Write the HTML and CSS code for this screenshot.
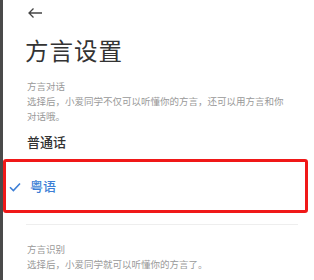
FILE: index.html
```html
<!DOCTYPE html>
<html lang="zh">
<head>
<meta charset="utf-8">
<link rel="stylesheet" href="styles.css">
</head>
<body>
<div class="page">
  <div class="back">
    <svg width="16" height="12" viewBox="0 0 16 12"><path d="M15 6H2M6.5 1.5L2 6l4.5 4.5" fill="none" stroke="#444" stroke-width="1.3"/></svg>
  </div>
  <h1 class="title">方言设置</h1>
  <div class="section">
    <div class="sec-head">方言对话</div>
    <div class="sec-desc">选择后，小爱同学不仅可以听懂你的方言，还可以用方言和你对话哦。</div>
  </div>
  <div class="option">普通话</div>
  <div class="option selected">
    <svg class="check" width="12" height="10" viewBox="0 0 12 10"><path d="M1 5.2l3.4 3.3L11 1.5" fill="none" stroke="#3d7fd6" stroke-width="1.6"/></svg>
    <span>粤语</span>
  </div>
  <div class="divider"></div>
  <div class="section second">
    <div class="sec-head">方言识别</div>
    <div class="sec-desc">选择后，小爱同学就可以听懂你的方言了。</div>
  </div>
</div>
</body>
</html>
```
FILE: styles.css
```css
html, body {
  margin: 0;
  padding: 0;
  background: #fff;
}
body {
  font-family: "Noto Sans CJK SC", "Noto Sans", sans-serif;
  width: 314px;
  height: 280px;
  overflow: hidden;
}
.page {
  border-left: 3px solid #4a4a4a;
  height: 280px;
  box-sizing: border-box;
  display: flex;
  flex-direction: column;
}
.back {
  padding: 6px 0 0 24px;
  height: 14px;
  display: flex;
  align-items: center;
}
.title {
  margin: 15px 0 0 22px;
  font-size: 23.5px;
  font-weight: 400;
  color: #333;
  line-height: 30px;
  letter-spacing: 1px;
}
.section {
  padding: 14px 24px 0 24px;
  color: #999;
  font-size: 9.5px;
  line-height: 15px;
}
.option {
  padding: 8px 0 0 24px;
  font-size: 13px;
  line-height: 20px;
  color: #333;
  font-weight: 500;
  height: 22px;
}
.option.selected {
  margin: 5px 6px 0 0;
  padding: 0 0 0 3px;
  height: 48px;
  border: 3px solid #f01818;
  border-radius: 3px;
  display: flex;
  align-items: center;
  gap: 9px;
  color: #3d7fd6;
  font-weight: 500;
}
.check {
  margin-top: 1px;
}
.divider {
  margin: 11px 16px 0 23px;
  height: 1px;
  background: #eee;
}
.section.second {
  padding-top: 17px;
}
```
